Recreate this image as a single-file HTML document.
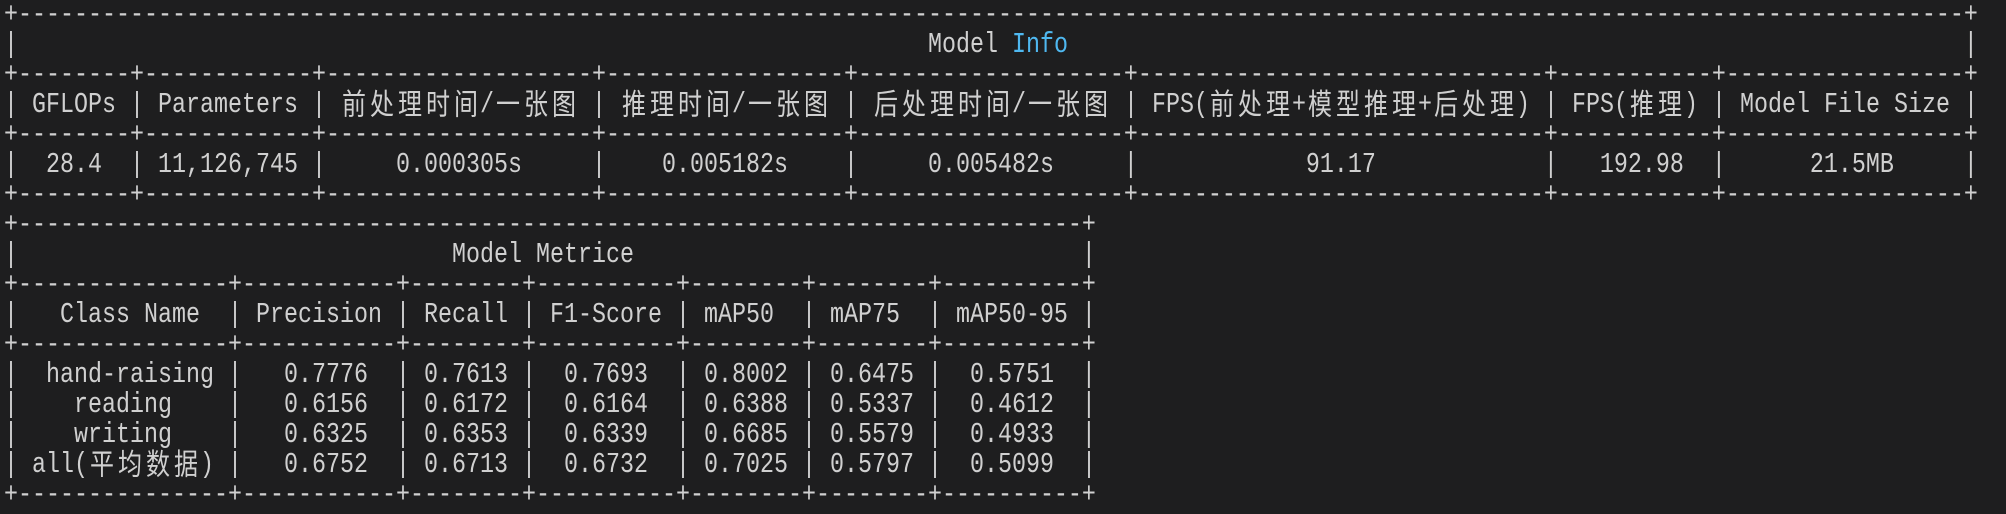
<!DOCTYPE html>
<html><head><meta charset="utf-8">
<style>
html,body{margin:0;padding:0;background:#1e1e1f;}
body{width:2006px;height:506px;overflow:hidden;position:relative;}
#t{position:absolute;left:4px;top:1px;}
.l{height:30px;line-height:30px;white-space:pre;font-family:"Liberation Mono",monospace;font-size:23.33px;color:#d0d0d0;transform:scaleY(1.22);transform-origin:50% 50%;overflow:visible;}
.c{display:inline-block;width:28px;height:30px;vertical-align:top;line-height:30px;text-align:center;font-family:"Noto Sans CJK SC","WenQuanYi Zen Hei",sans-serif;font-size:24px;position:relative;top:-3px;}
.b{color:#4fb8f0;}
</style></head><body>
<div id="t"></div>
<script>
function isC(ch){return /[\u3000-\u9fff\uff00-\uffef]/.test(ch);}
function w(s){let n=0;for(const ch of s)n+=isC(ch)?2:1;return n;}
function sp(n){return " ".repeat(n);}
function esc(s){let o="";for(const ch of s){if(isC(ch))o+='<span class="c">'+ch+'</span>';else if(ch=="<")o+="&lt;";else if(ch=="&")o+="&amp;";else o+=ch;}return o;}
function border(ws){return "+"+ws.map(x=>"-".repeat(x)).join("+")+"+";}
function row(ws,cells,lefts){return "|"+cells.map((c,i)=>{const L=lefts[i];return sp(L)+c+sp(ws[i]-L-w(c));}).join("|")+"|";}
const W1=[8,12,19,17,19,29,11,17];
const W2=[15,11,8,10,8,8,10];
const lines=[];
lines.push(esc(border([139])));
lines.push("|"+sp(65)+'Model <span class="b">Info</span>'+sp(64)+"|");
lines.push(esc(border(W1)));
lines.push(esc(row(W1,["GFLOPs","Parameters","前处理时间/一张图","推理时间/一张图","后处理时间/一张图","FPS(前处理+模型推理+后处理)","FPS(推理)","Model File Size"],[1,1,1,1,1,1,1,1])));
lines.push(esc(border(W1)));
lines.push(esc(row(W1,["28.4","11,126,745","0.000305s","0.005182s","0.005482s","91.17","192.98","21.5MB"],[2,1,5,4,5,12,3,6])));
lines.push(esc(border(W1)));
lines.push(esc(border([76])));
lines.push(esc("|"+sp(31)+"Model Metrice"+sp(32)+"|"));
lines.push(esc(border(W2)));
lines.push(esc(row(W2,["Class Name","Precision","Recall","F1-Score","mAP50","mAP75","mAP50-95"],[3,1,1,1,1,1,1])));
lines.push(esc(border(W2)));
const L2=[0,3,1,2,1,1,2];
const data=[["hand-raising","0.7776","0.7613","0.7693","0.8002","0.6475","0.5751"],
["reading","0.6156","0.6172","0.6164","0.6388","0.5337","0.4612"],
["writing","0.6325","0.6353","0.6339","0.6685","0.5579","0.4933"],
["all(平均数据)","0.6752","0.6713","0.6732","0.7025","0.5797","0.5099"]];
const firstL=[2,4,4,1];
data.forEach((d,i)=>{const L=L2.slice();L[0]=firstL[i];lines.push(esc(row(W2,d,L)));});
lines.push(esc(border(W2)));
document.getElementById("t").innerHTML=lines.map(s=>'<div class="l">'+s+'</div>').join("");
</script>
</body></html>
